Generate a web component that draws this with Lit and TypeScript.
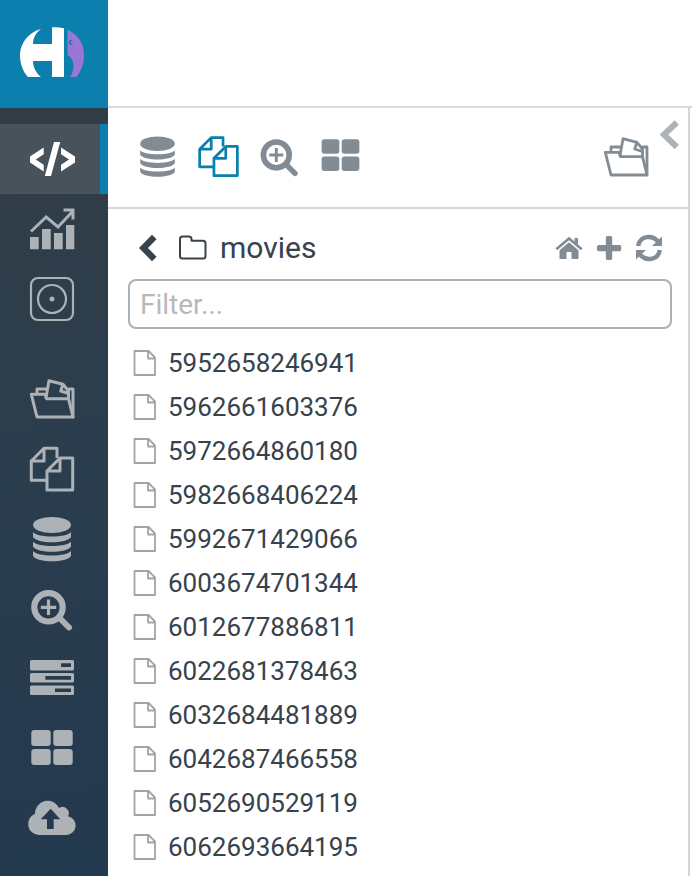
import { LitElement, html, svg, css } from "lit";
import { customElement, property, state } from "lit/decorators.js";

const icons: Record<string, unknown> = {
  code: svg`<g fill="currentColor">
    <path d="M19.700 16.500L6 25.500v6l13.700 9V33.800L11.800 28.500l7.900-5.300z"/>
    <path d="M37 16.500l14 9v6l-14 9V33.800l8-5.300-8-5.300z"/>
    <path d="M30 11h6.200L27 45h-6.200z"/></g>`,
  chart: svg`<path fill="currentColor" d="M6 36h8.700v12.300H6zM18 28h8.700v20.300H18zM30 32h8.700v16.300H30zM42 24h8.300v24.300H42z"/>
    <path fill="none" stroke="currentColor" stroke-width="3" d="M7 30.500L22.200 16 34 26 49 10M39.500 9H49v9.500"/>`,
  scheduler: svg`<g fill="none" stroke="currentColor" stroke-width="2.200">
    <rect x="7" y="7" width="42" height="42" rx="7"/><circle cx="28" cy="28" r="14"/></g>
    <circle cx="28" cy="28" r="2.500" fill="currentColor"/>`,
  documents: svg`<g fill="none" stroke="currentColor" stroke-linejoin="round" stroke-linecap="round">
    <path d="M7.300 23.300h14l1.200 4.400h22L49 46H13z"/>
    <path d="M13 22.500V18h8.500M22 26.500L25 9.700l14 3.600 5.500 6.700v7M39 13.300L36.700 20l7.800 2.500M45 18h4v28"/></g>`,
  files: svg`<g fill="none" stroke="currentColor" stroke-linejoin="round">
    <path d="M33 17V7.300H20L7.300 20v19.300H23M20 7.300V20H7.300"/>
    <path d="M36 17L23 30v19h25.700V17zM36 17v13H23"/></g>`,
  database: svg`<g fill="currentColor"><ellipse cx="28" cy="14" rx="19" ry="8"/>
    <path d="M9 21C13 27 43 27 47 21v5c-4 7-34 7-38 0zM9 30.500c4 6 34 6 38 0v5c-4 7-34 7-38 0zM9 40c4 6 34 6 38 0v5c-4 7-34 7-38 0z"/></g>`,
  search: svg`<g fill="none" stroke="currentColor">
    <circle cx="24.500" cy="26.300" r="14.200" stroke-width="6.200"/>
    <path stroke-width="3.200" d="M16.800 26.300h15.400M24.500 18.600V34"/>
    <path stroke-width="6" stroke-linecap="round" d="M36 37.500l9 9"/></g>`,
  server: svg`<path fill="currentColor" fill-rule="evenodd" d="M7.500 9h41q1.500 0 1.500 1.500v7.500q0 1.500-1.500 1.500h-41Q6 19.500 6 18v-7.500Q6 9 7.500 9zM37 12.300V16h10v-3.700zM7.500 22h41q1.500 0 1.500 1.500v6.500q0 1.500-1.500 1.500h-41Q6 31.500 6 30v-6.500Q6 22 7.500 22zM21.300 25v3.700H47V25zM7.500 34.500h41Q50 34.500 50 36v6.500q0 1.500-1.500 1.500h-41Q6 44 6 42.500V36q0-1.500 1.500-1.500zM31 37.500V41h16v-3.500z"/>`,
  grid: svg`<g fill="currentColor"><rect x="7.300" y="9" width="19.400" height="16" rx="3"/>
    <rect x="29.300" y="9" width="19.400" height="16" rx="3"/><rect x="7.300" y="28" width="19.400" height="16" rx="3"/>
    <rect x="29.300" y="28" width="19.400" height="16" rx="3"/></g>`,
  upload: svg`<path fill="currentColor" fill-rule="evenodd" d="M15.300 44A11 11 0 0 1 11 22.800a12.700 12.700 0 0 1 24.200-5.800 6.200 6.200 0 0 1 8.800 8.200A9.500 9.500 0 0 1 42.500 44zM26.700 17.700l-10 10.600H23V38h6.700v-9.700h6.600z"/>`,
};

@customElement("hue-icon")
export class HueIcon extends LitElement {
  @property() name = "";
  static styles = css`
    :host { display: block; }
    svg { display: block; width: 100%; height: 100%; stroke-width: var(--line, 3); }
  `;
  render() {
    return html`<svg viewBox="0 0 56 56" aria-hidden="true">${icons[this.name]}</svg>`;
  }
}

@customElement("hue-sidebar")
export class HueSidebar extends LitElement {
  private groups = [
    [["code", "Editor"], ["chart", "Dashboard"], ["scheduler", "Scheduler"]],
    [
      ["documents", "Documents"], ["files", "Files"], ["database", "Tables"], ["search", "Indexes"],
      ["server", "Jobs"], ["grid", "HBase"], ["upload", "Importer"],
    ],
  ];
  static styles = css`
    :host {
      display: flex; flex-direction: column; flex: none; width: 108px;
      background: linear-gradient(170deg, #323c47 12%, #2c3e4c 45%, #23394f 100%);
    }
    .logo { display: block; height: 108px; background: #0b7fad; }
    .logo svg { display: block; }
    nav { display: flex; flex-direction: column; gap: 30px; padding-top: 16px; }
    .group { display: flex; flex-direction: column; }
    .item {
      display: flex; align-items: center; box-sizing: border-box; height: 70px;
      padding-left: 24px; color: #adb2b6;
    }
    .item.active { color: #fff; background: #47525b; border-right: 8px solid #0b7fad; }
    hue-icon { width: 56px; height: 56px; }
  `;
  render() {
    return html`
      <a class="logo" href="#home" aria-label="Hue home">
        <svg width="108" height="108" viewBox="0 0 108 108" aria-hidden="true">
          <path fill="#fff" d="M41 29C36 32.500 33 38 33 44h19V27.300q6-.6 12 1V77H52V61H33c0 6 3 12 8 16H28C22.500 71 20 63 20 55.500 20 43 29 32 41 29z"/>
          <path fill="#9877d5" d="M67.500 30C77 33.500 84 43 84 55c0 9-3 16.500-7.500 22H70c4.500-6 5.500-18-2.500-22z"/>
          <path fill="none" stroke="#0b7fad" stroke-width="1.500" d="M72.300 40.500h-1.300q-1.500 0-1.500 1.800t1.500 1.800h1.300"/>
        </svg>
      </a>
      <nav aria-label="Applications">
        ${this.groups.map((g) => html`<div class="group">${g.map(([icon, label]) => html`
          <a class="item ${icon === "code" ? "active" : ""}" href="#${icon}" aria-label=${label}>
            <hue-icon name=${icon}></hue-icon></a>`)}</div>`)}
      </nav>`;
  }
}

@customElement("app-root")
export class AppRoot extends LitElement {
  @state() private filter = "";
  private files = [
    "5952658246941", "5962661603376", "5972664860180", "5982668406224", "5992671429066", "6003674701344",
    "6012677886811", "6022681378463", "6032684481889", "6042687466558", "6052690529119", "6062693664195",
  ];
  static styles = css`
    :host {
      display: flex; min-height: 100vh; background: #fff; color: #36424c;
      font-family: Roboto, "Liberation Sans", sans-serif;
    }
    main { flex: 1; min-width: 0; display: flex; flex-direction: column; }
    .topbar { height: 106px; flex: none; }
    .body { flex: 1; border-top: 2px solid #d8d9dd; padding-right: 2px; display: flex; }
    .panel { flex: 1; min-width: 0; border-right: 2px solid #d5d6db; }
    button { display: block; flex: none; padding: 0; border: 0; background: none; color: #838c94; cursor: pointer; }
    button svg { display: block; }
    .toolbar {
      display: flex; align-items: center; gap: 10px; box-sizing: border-box; height: 101px;
      padding: 0 8px 2px 24px; border-bottom: 2px solid #d5d6db;
    }
    .tool hue-icon { width: 51px; height: 51px; }
    .tool.active { color: #0b7fad; --line: 3; }
    .end { display: flex; align-items: center; align-self: stretch; gap: 6px; margin-left: auto; --line: 2.8; }
    .end hue-icon { width: 56px; height: 56px; }
    .collapse { align-self: flex-start; padding-top: 12px; color: #adb2b6; }
    .crumbs { display: flex; align-items: center; box-sizing: border-box; height: 70px; padding: 8px 24px 0 30px; }
    .back { color: #36424c; }
    .crumb { display: flex; align-items: center; gap: 12px; margin-left: 20px; font-size: 30px; line-height: 36px; color: inherit; text-decoration: none; }
    .crumb svg { display: block; }
    .actions { display: flex; gap: 12px; margin-left: auto; padding-right: 1px; }
    .search { padding: 0 16px 0 20px; }
    input {
      display: block; box-sizing: border-box; width: 100%; height: 50px; padding: 0 10px;
      border: 2px solid #acb1b6; border-radius: 8px; background: #fff; font: 28px Roboto, "Liberation Sans", sans-serif; color: inherit; outline: none;
    }
    input::placeholder { color: #b8b8b8; opacity: 1; }
    ul { list-style: none; margin: 0; padding: 12px 24px 0; }
    li a {
      display: flex; align-items: center; gap: 11px; height: 44px; font-size: 26px; line-height: 44px;
      color: inherit; text-decoration: none;
    }
  `;
  render() {
    const tools = [["database", "Databases"], ["files", "Files"], ["search", "Indexes"], ["grid", "HBase"]];
    return html`
      <hue-sidebar></hue-sidebar>
      <main>
        <header class="topbar"></header>
        <div class="body">
          <section class="panel">
            <div class="toolbar">
              ${tools.map(([icon, label]) => html`
                <button class="tool ${icon === "files" ? "active" : ""}" aria-label=${label}><hue-icon name=${icon}></hue-icon></button>`)}
              <div class="end">
                <button aria-label="Documents"><hue-icon name="documents"></hue-icon></button>
                <button class="collapse" aria-label="Collapse panel">
                  <svg width="20" height="30" viewBox="0 0 20 30"><path fill="none" stroke="currentColor" stroke-width="6" d="M16.800 2.500L4 14.700l12.800 12.300"/></svg>
                </button>
              </div>
            </div>
            <div class="crumbs">
              <button class="back" aria-label="Back">
                <svg width="20" height="28" viewBox="0 0 20 28"><path fill="none" stroke="currentColor" stroke-width="6.400" d="M16.300 3L5.500 14l10.800 11"/></svg>
              </button>
              <a class="crumb" href="#movies">
                <svg width="30" height="26" viewBox="0 0 30 26" aria-hidden="true"><path fill="none" stroke="currentColor" stroke-width="2" stroke-linejoin="round" d="M2 4q0-2.500 2.500-2.500h6.500q2.500 0 2.500 2.500v1.800H25q2.500 0 2.500 2.500V21q0 2.500-2.500 2.500H4.500Q2 23.500 2 21z"/></svg>
                <span>movies</span>
              </a>
              <div class="actions">
                <button aria-label="Home"><svg width="28" height="28" viewBox="0 0 28 28"><path fill="none" stroke="currentColor" stroke-width="2.600" d="M1.300 15.300L14 4.500l12.700 10.800"/><path fill="currentColor" d="M19.500 4H23v9l-3.500-3zM14 8.200l9.500 8V25h-7v-7h-5v7h-7v-8.800z"/></svg></button>
                <button aria-label="Add"><svg width="28" height="28" viewBox="0 0 28 28"><path fill="currentColor" d="M12.500 2h3q1.700 0 1.700 1.700V11h7.300q1.700 0 1.700 1.700v2.800q0 1.700-1.700 1.700h-7.300v7.100q0 1.700-1.700 1.700h-3q-1.700 0-1.700-1.700v-7.100H3.700Q2 17.200 2 15.500v-2.800Q2 11 3.700 11h7.100V3.700Q10.800 2 12.500 2z"/></svg></button>
                <button aria-label="Refresh"><svg width="28" height="28" viewBox="0 0 28 28"><path fill="none" stroke="currentColor" stroke-width="4.400" d="M3.200 12C5 1.500 17 .5 23 7.500M24.800 16C23 26.500 11 27.500 5 20.500"/><path fill="currentColor" d="M27 2.500V12H17zM1 25.500V16h10z"/></svg></button>
              </div>
            </div>
            <div class="search">
              <input type="text" placeholder="Filter..." aria-label="Filter files" .value=${this.filter}
                @input=${(e: Event) => (this.filter = (e.target as HTMLInputElement).value)}>
            </div>
            <ul>
              ${this.files.filter((f) => f.includes(this.filter)).map((f) => html`
                <li><a href="#${f}">
                  <svg width="25" height="28" viewBox="0 0 25 28" aria-hidden="true"><path fill="none" stroke="#a3a3a3" stroke-width="1.800" stroke-linejoin="round" d="M2.500 2h14l6.500 6.500V26H2.500zM16 2v7.500h7"/></svg>
                  <span>${f}</span></a></li>`)}
            </ul>
          </section>
        </div>
      </main>`;
  }
}
